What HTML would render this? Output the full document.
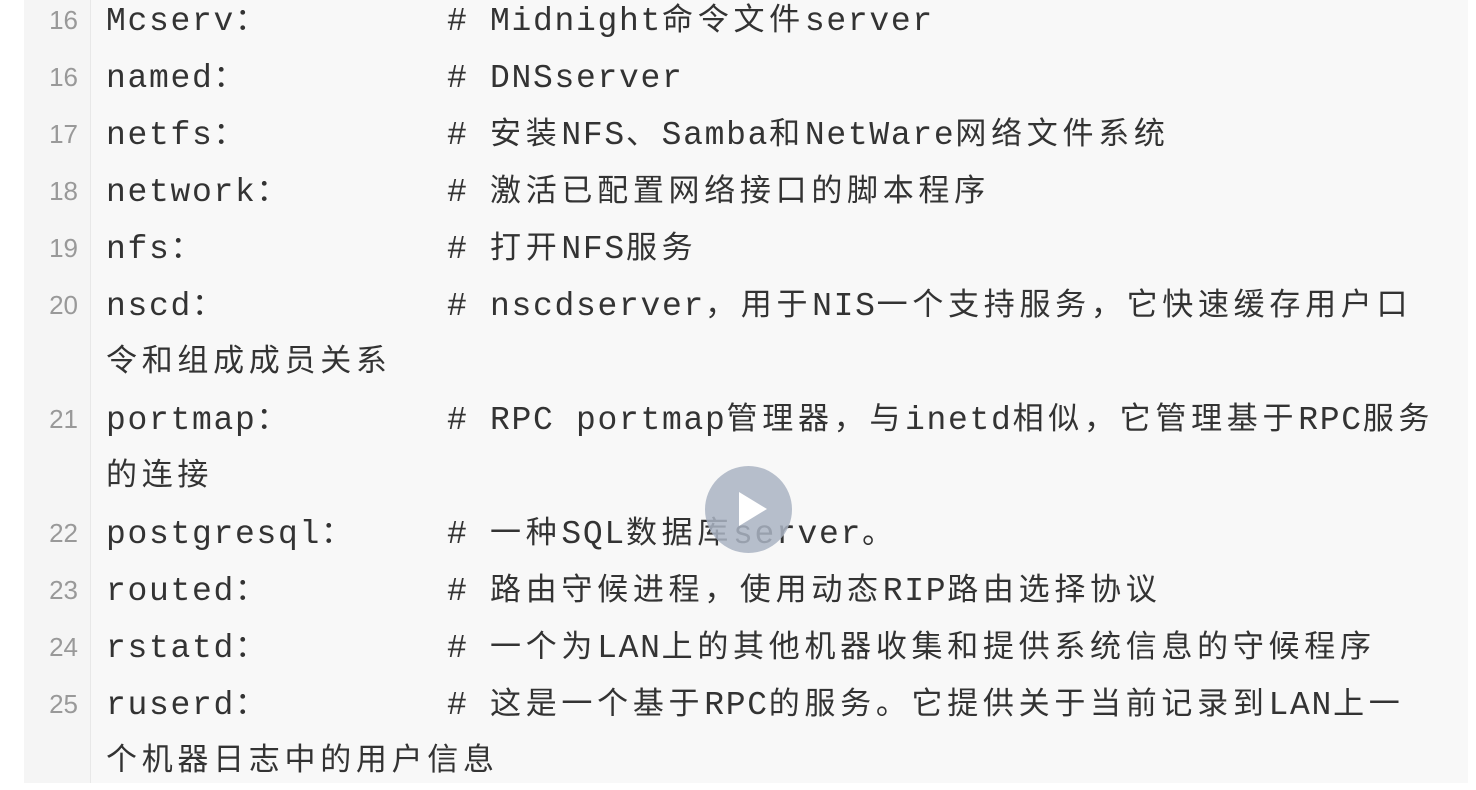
<!DOCTYPE html>
<html><head><meta charset="utf-8"><style>
html,body{margin:0;padding:0;background:#fff;width:1476px;height:786px;overflow:hidden}
.box{position:absolute;left:24px;top:0;width:1444px;height:783px;background:#f8f8f8}
.gut{position:absolute;left:24px;top:0;width:66px;height:783px;background:#f5f5f5;border-right:1px solid #e8e8e8}
.l{position:absolute;height:57px;line-height:57px;white-space:nowrap;font-family:"Liberation Mono","Noto Sans CJK SC",monospace;font-size:33px;letter-spacing:1.7px;color:#333;margin-top:6px}
.n{position:absolute;left:24px;width:54px;text-align:right;font-family:"Liberation Sans",sans-serif;font-size:26px;color:#999;height:57px;line-height:57px}
.c{font-family:"Noto Sans CJK SC",sans-serif;font-size:31px;letter-spacing:4.7px;line-height:1}
.play{position:absolute;left:705px;top:466px;width:87px;height:87px;border-radius:50%;background:rgba(170,180,195,0.85)}
.play:after{content:"";position:absolute;left:34px;top:26px;border-left:28px solid #fff;border-top:17px solid transparent;border-bottom:17px solid transparent}
</style></head><body>
<div class="box"></div><div class="gut"></div>

<div class="n" style="top:-8px">16</div><div class="l" style="left:106px;top:-13px">Mcserv<span class="c">：</span></div><div class="l" style="left:447px;top:-13px"># Midnight<span class="c">命令文件</span>server</div>
<div class="n" style="top:49px">16</div><div class="l" style="left:106px;top:44px">named<span class="c">：</span></div><div class="l" style="left:447px;top:44px"># DNSserver</div>
<div class="n" style="top:106px">17</div><div class="l" style="left:106px;top:101px">netfs<span class="c">：</span></div><div class="l" style="left:447px;top:101px"># <span class="c">安装</span>NFS<span class="c">、</span>Samba<span class="c">和</span>NetWare<span class="c">网络文件系统</span></div>
<div class="n" style="top:163px">18</div><div class="l" style="left:106px;top:158px">network<span class="c">：</span></div><div class="l" style="left:447px;top:158px"># <span class="c">激活已配置网络接口的脚本程序</span></div>
<div class="n" style="top:220px">19</div><div class="l" style="left:106px;top:215px">nfs<span class="c">：</span></div><div class="l" style="left:447px;top:215px"># <span class="c">打开</span>NFS<span class="c">服务</span></div>
<div class="n" style="top:277px">20</div><div class="l" style="left:106px;top:272px">nscd<span class="c">：</span></div><div class="l" style="left:447px;top:272px"># nscdserver<span class="c">，用于</span>NIS<span class="c">一个支持服务，它快速缓存用户口</span></div>
<div class="l" style="left:106px;top:328px"><span class="c">令和组成成员关系</span></div>
<div class="n" style="top:391px">21</div><div class="l" style="left:106px;top:386px">portmap<span class="c">：</span></div><div class="l" style="left:447px;top:386px"># RPC portmap<span class="c">管理器，与</span>inetd<span class="c">相似，它管理基于</span>RPC<span class="c">服务</span></div>
<div class="l" style="left:106px;top:442px"><span class="c">的连接</span></div>
<div class="n" style="top:505px">22</div><div class="l" style="left:106px;top:500px">postgresql<span class="c">：</span></div><div class="l" style="left:447px;top:500px"># <span class="c">一种</span>SQL<span class="c">数据库</span>server<span class="c">。</span></div>
<div class="n" style="top:562px">23</div><div class="l" style="left:106px;top:557px">routed<span class="c">：</span></div><div class="l" style="left:447px;top:557px"># <span class="c">路由守候进程，使用动态</span>RIP<span class="c">路由选择协议</span></div>
<div class="n" style="top:619px">24</div><div class="l" style="left:106px;top:614px">rstatd<span class="c">：</span></div><div class="l" style="left:447px;top:614px"># <span class="c">一个为</span>LAN<span class="c">上的其他机器收集和提供系统信息的守候程序</span></div>
<div class="n" style="top:676px">25</div><div class="l" style="left:106px;top:671px">ruserd<span class="c">：</span></div><div class="l" style="left:447px;top:671px"># <span class="c">这是一个基于</span>RPC<span class="c">的服务。它提供关于当前记录到</span>LAN<span class="c">上一</span></div>
<div class="l" style="left:106px;top:727px"><span class="c">个机器日志中的用户信息</span></div>

<div class="play"></div>
</body></html>
